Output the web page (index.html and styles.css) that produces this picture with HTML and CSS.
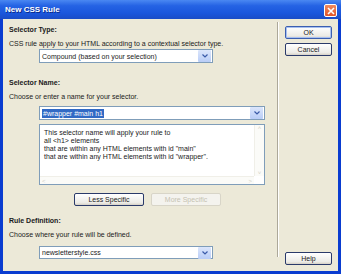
FILE: index.html
```html
<!DOCTYPE html>
<html lang="en">
<head>
    <meta charset="UTF-8">
    <title>New CSS Rule</title>
    <link rel="stylesheet" href="styles.css">
</head>
<body>

<div class="window">
    <!-- title bar -->
    <div class="titlebar">
        <span class="title">New CSS Rule</span>
        <span class="close">
            <svg width="8" height="8" viewBox="0 0 8 8"><path d="M1 1L7 7M7 1L1 7" stroke="#fff" stroke-width="1.6"/></svg>
        </span>
    </div>

    <div class="content">
        <div class="main">
            <h2 class="heading first">Selector Type:</h2>
            <p class="hint">CSS rule apply to your HTML according to a contextual selector type.</p>
            <div class="select short first-select">
                <span class="value">Compound (based on your selection)</span>
                <span class="arrow"><svg width="6" height="4" viewBox="0 0 6 4"><path d="M0.5 0.5L3 3L5.5 0.5" fill="none" stroke="#3a5aa8" stroke-width="1.2"/></svg></span>
            </div>

            <h2 class="heading">Selector Name:</h2>
            <p class="hint">Choose or enter a name for your selector.</p>
            <div class="select wide">
                <span class="value"><span class="selected">#wrapper #main h1</span></span>
                <span class="arrow"><svg width="6" height="4" viewBox="0 0 6 4"><path d="M0.5 0.5L3 3L5.5 0.5" fill="none" stroke="#3a5aa8" stroke-width="1.2"/></svg></span>
            </div>

            <div class="textbox">
                <div class="textrow">
                    <div class="text">
                        This selector name will apply your rule to<br>
                        all &lt;h1&gt; elements<br>
                        that are within any HTML elements with id "main"<br>
                        that are within any HTML elements with id "wrapper".
                    </div>
                    <div class="vscroll">
                        <span class="sarrow">&#708;</span>
                        <span class="sarrow">&#709;</span>
                    </div>
                </div>
                <div class="hscroll">
                    <span class="sarrow">&#706;</span>
                    <span class="sarrow">&#707;</span>
                </div>
            </div>

            <div class="specific">
                <button class="btn">Less Specific</button>
                <button class="btn" disabled>More Specific</button>
            </div>

            <h2 class="heading rule">Rule Definition:</h2>
            <p class="hint">Choose where your rule will be defined.</p>
            <div class="select short last-select">
                <span class="value">newsletterstyle.css</span>
                <span class="arrow"><svg width="6" height="4" viewBox="0 0 6 4"><path d="M0.5 0.5L3 3L5.5 0.5" fill="none" stroke="#3a5aa8" stroke-width="1.2"/></svg></span>
            </div>
        </div>

        <div class="divider"></div>

        <div class="side">
            <button class="btn side-btn default">OK</button>
            <button class="btn side-btn">Cancel</button>
            <button class="btn side-btn help">Help</button>
        </div>
    </div>
</div>

</body>
</html>
```

FILE: styles.css
```css
* {
    box-sizing: border-box;
}
body {
    margin: 0;
    font-family: "Liberation Sans", Arial, sans-serif;
    font-size: 7px;
    color: #1a1a1a;
}
.window {
    width: 341px;
    height: 274px;
    background-color: #0a3cd0;
    padding: 0 3px 3px 3px;
    display: flex;
    flex-direction: column;
}
.titlebar {
    height: 19px;
    margin: 0 -3px;
    padding: 0 4px 0 5px;
    display: flex;
    align-items: center;
    justify-content: space-between;
    background: linear-gradient(#4a88f2, #2563e4 30%, #1a56dc 70%, #1a4cc6);
}
.title {
    color: #fff;
    font-weight: bold;
    font-size: 8px;
    text-shadow: 1px 1px 0 #0a2a8a;
}
.close {
    width: 13px;
    height: 13px;
    margin-top: 2px;
    border: 1px solid #fff;
    border-radius: 2px;
    background: linear-gradient(#f08a5e, #e2552a);
    display: flex;
    align-items: center;
    justify-content: center;
}
.content {
    flex: 1;
    background-color: #ece9d8;
    display: flex;
}
.main {
    width: 274px;
    padding-left: 6px;
}
.heading {
    margin: 16px 0 0 0;
    font-size: 7px;
    font-weight: bold;
    line-height: 8px;
}
.heading.first {
    margin-top: 7px;
}
.heading.rule {
    margin-top: 11px;
}
.hint {
    margin: 6px 0 0 0;
    line-height: 8px;
}
.select {
    margin: 5px 0 0 30px;
    height: 14px;
    border: 1px solid #7f9db9;
    background-color: #fff;
    display: flex;
    align-items: center;
}
.select.first-select {
    margin-top: 1px;
    height: 14px;
}
.select.last-select {
    margin-top: 7px;
    height: 13px;
}
.select.short {
    width: 174px;
}
.select.wide {
    width: 226px;
}
.value {
    flex: 1;
    padding-left: 2px;
    white-space: nowrap;
}
.selected {
    background-color: #316ac5;
    color: #fff;
    padding: 1px 1px;
}
.arrow {
    width: 13px;
    height: 12px;
    margin-right: 1px;
    background: linear-gradient(#dce6fb, #b9cdf7);
    border-radius: 1px;
    display: flex;
    align-items: center;
    justify-content: center;
}
.textbox {
    margin: 4px 0 0 30px;
    width: 226px;
    height: 61px;
    border: 1px solid #7f9db9;
    background-color: #fff;
    display: flex;
    flex-direction: column;
}
.textrow {
    flex: 1;
    display: flex;
}
.text {
    flex: 1;
    padding: 4px 0 0 4px;
    line-height: 8px;
}
.vscroll {
    width: 10px;
    background-color: #fbfbf8;
    border-left: 1px solid #f0efe8;
    display: flex;
    flex-direction: column;
    justify-content: space-between;
    align-items: center;
}
.hscroll {
    height: 8px;
    margin-right: 10px;
    background-color: #fbfbf8;
    border-top: 1px solid #f0efe8;
    display: flex;
    justify-content: space-between;
    align-items: center;
    padding: 0 2px;
}
.sarrow {
    color: #d2d0c6;
    font-size: 6px;
    line-height: 6px;
}
.specific {
    margin: 8px 0 0 65px;
    display: flex;
    gap: 7px;
}
.btn {
    font-family: "Liberation Sans", Arial, sans-serif;
    font-size: 7px;
    color: #1a1a1a;
    width: 70px;
    height: 13px;
    padding: 0;
    border: 1px solid #2a3a6a;
    border-radius: 2px;
    background: linear-gradient(#ffffff, #ecebe6 80%, #d6d0c5);
}
.btn:disabled {
    color: #c5c2b2;
    border-color: #d8d5c8;
    background: #f4f3ee;
}
.divider {
    width: 2px;
    margin: 3px 0 14px 0;
    border-left: 1px solid #aca899;
    border-right: 1px solid #fff;
}
.side {
    flex: 1;
    padding: 7px 0 6px 6px;
    display: flex;
    flex-direction: column;
    gap: 4px;
}
.side-btn {
    width: 47px;
}
.side-btn.default {
    border-color: #3c5fb0;
    box-shadow: inset 0 0 0 1px #a8c0f0;
}
.help {
    margin-top: auto;
}
```
